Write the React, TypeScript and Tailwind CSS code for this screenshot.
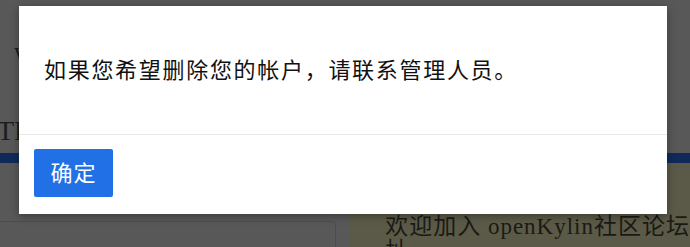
export default function App() {
  const serif = { fontFamily: '"Liberation Serif", "Noto Sans CJK SC", serif' }

  return (
    <div className="relative h-[247px] w-[690px] overflow-hidden bg-[#585858]" style={serif}>
      {/* Page behind the dialog, already dimmed */}
      <div className="flex h-[153px] flex-col">
        <div className="h-[42px]" />
        <div className="pl-[14px] text-[22px] leading-[26px] text-[#1c1c1c]">W</div>
        <div className="flex-1" />
        <div className="-ml-[3px] pb-[9px] text-[28px] leading-[26px] text-[#1c1c1c]">TP</div>
      </div>
      <div className="h-[10px] bg-[#0f2a5a]" />
      <div className="flex">
        <div className="flex w-[352px] flex-col">
          <div className="h-[58px]" />
          <div className="-ml-[4px] h-[40px] w-[340px] rounded-sm border border-[#4c4c4c]" />
        </div>
        <div className="h-[84px] flex-1 bg-[#5b5a48] pl-[36px] pt-[52px] text-[23px] leading-[24px] tracking-[1px] text-[#1a1a14]">
          <p className="whitespace-nowrap">欢迎加入&nbsp;openKylin社区论坛</p>
          <p className="whitespace-nowrap">址</p>
        </div>
      </div>

      {/* Dialog */}
      <div className="absolute left-[19px] top-[6px] flex h-[208px] w-[648px] flex-col bg-white shadow-[0_2px_8px_rgba(0,0,0,0.35)]">
        <div className="flex h-[128px] items-center px-[25px]">
          <p className="whitespace-nowrap text-[22px] tracking-[1.7px] text-[#111]">
            如果您希望删除您的帐户，请联系管理人员。
          </p>
        </div>
        <div className="h-px bg-[#e8e8e8]" />
        <div className="px-[15px] pt-[14px]">
          <button className="flex h-[48px] w-[79px] items-center justify-center rounded-[2px] bg-[#2270e5] text-[22px] tracking-[1px] text-white">
            确定
          </button>
        </div>
      </div>
    </div>
  )
}
